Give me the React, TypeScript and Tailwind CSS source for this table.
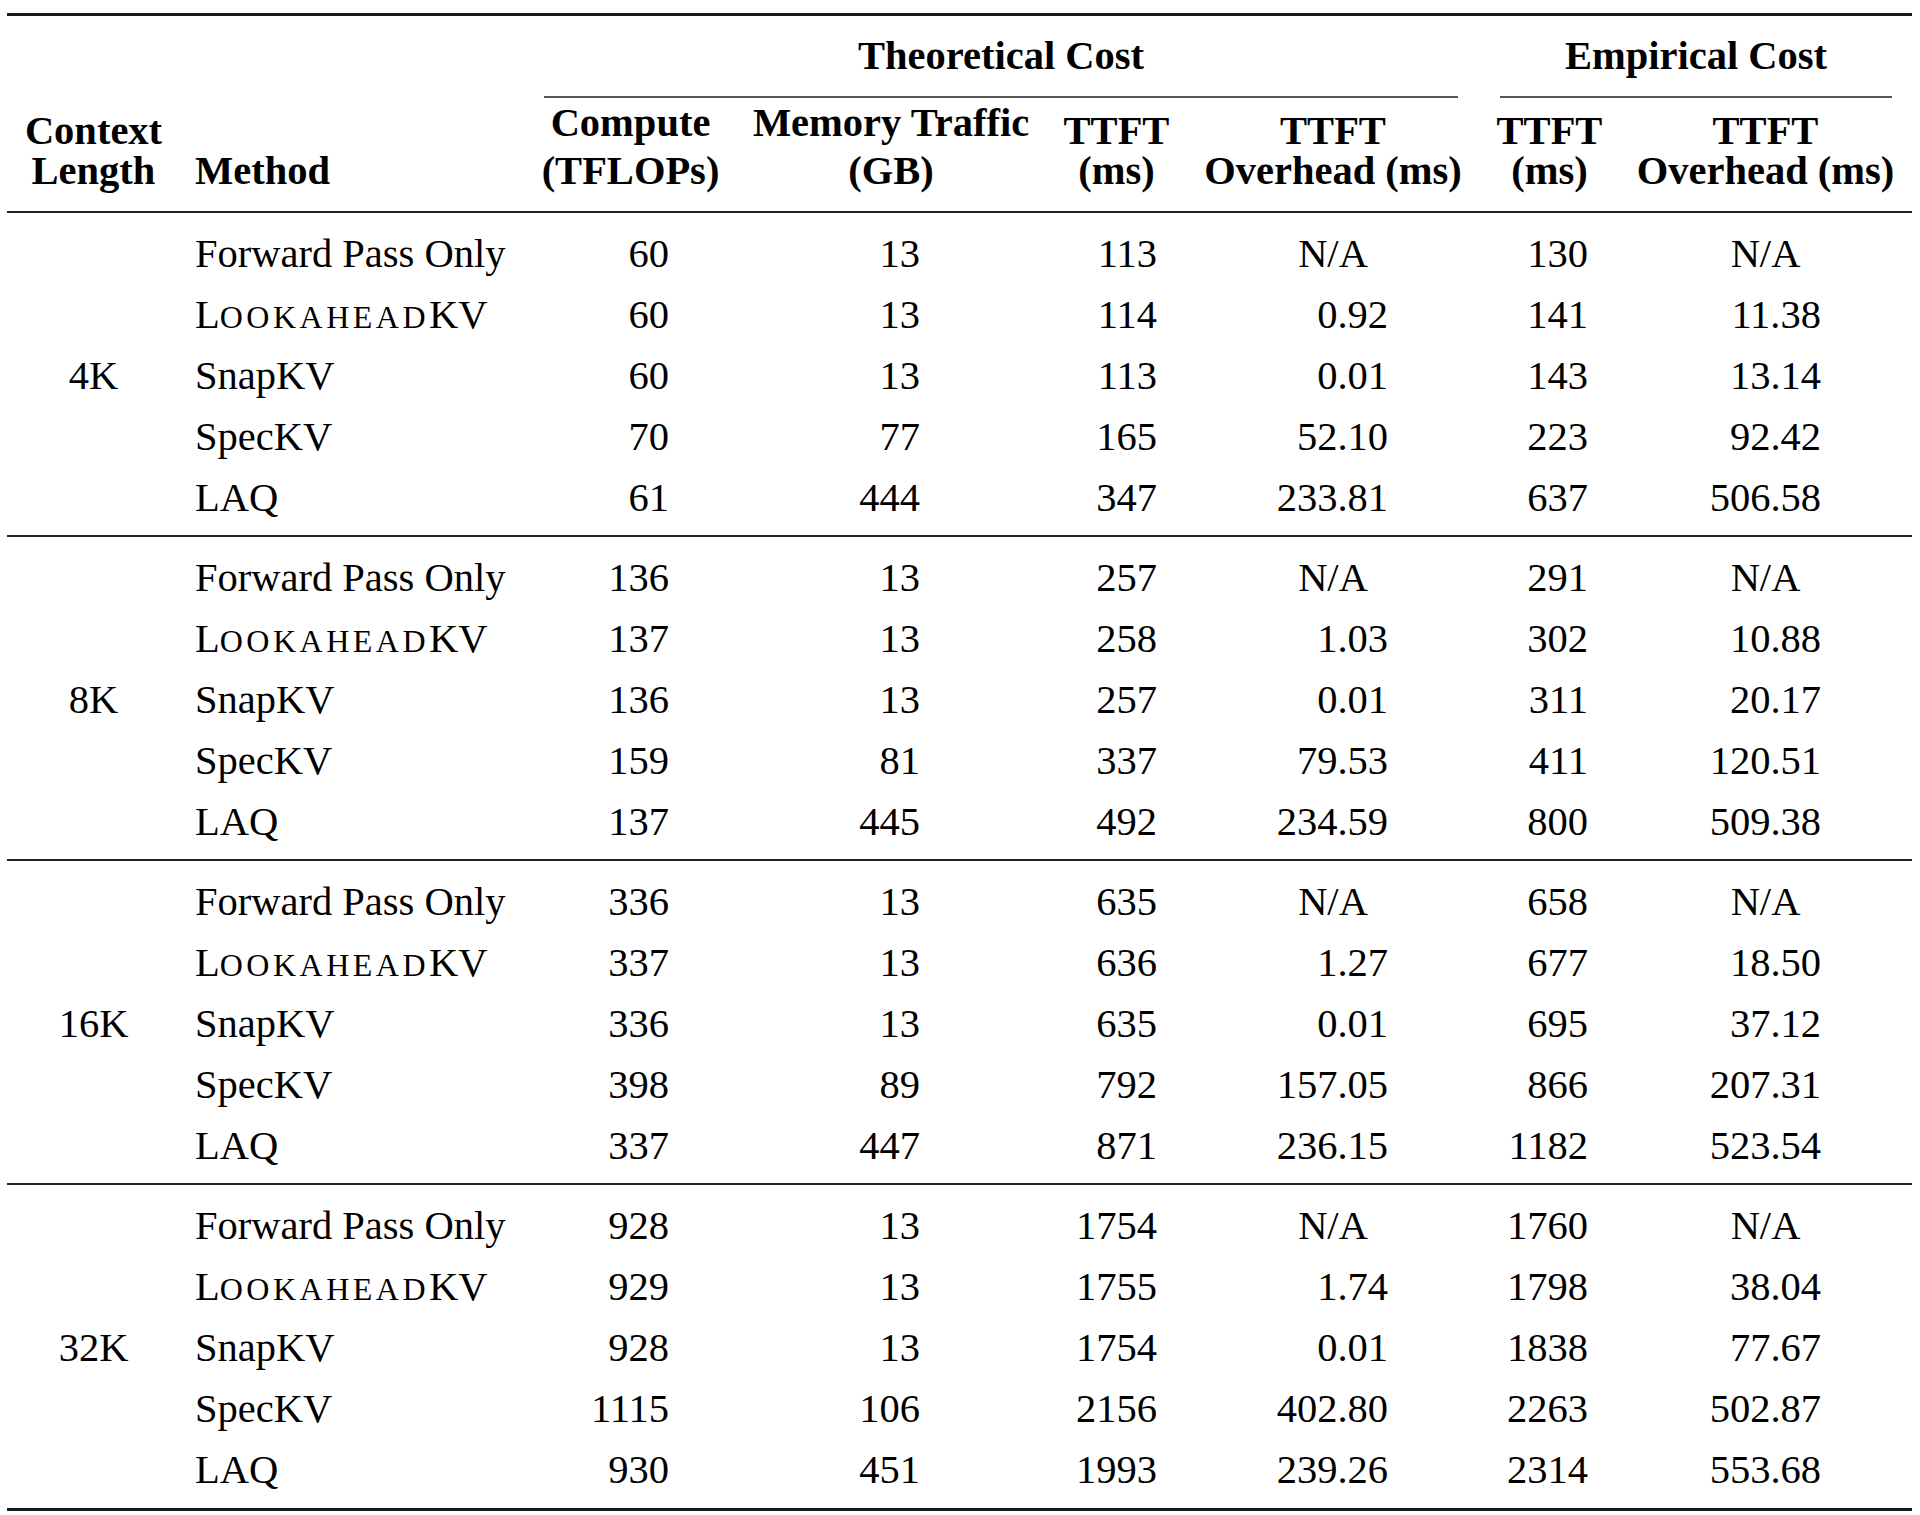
import React, { Fragment } from "react";

type Row = {
  method: string;
  compute: string;
  memory: string;
  ttft: string;
  overhead: string;
  empTtft: string;
  empOverhead: string;
};

type Group = { label: string; rows: Row[] };

const mk = (
  method: string,
  compute: string,
  memory: string,
  ttft: string,
  overhead: string,
  empTtft: string,
  empOverhead: string
): Row => ({ method, compute, memory, ttft, overhead, empTtft, empOverhead });

const groups: Group[] = [
  {
    label: "4K",
    rows: [
      mk("fwd", "60", "13", "113", "N/A", "130", "N/A"),
      mk("lookahead", "60", "13", "114", "0.92", "141", "11.38"),
      mk("SnapKV", "60", "13", "113", "0.01", "143", "13.14"),
      mk("SpecKV", "70", "77", "165", "52.10", "223", "92.42"),
      mk("LAQ", "61", "444", "347", "233.81", "637", "506.58"),
    ],
  },
  {
    label: "8K",
    rows: [
      mk("fwd", "136", "13", "257", "N/A", "291", "N/A"),
      mk("lookahead", "137", "13", "258", "1.03", "302", "10.88"),
      mk("SnapKV", "136", "13", "257", "0.01", "311", "20.17"),
      mk("SpecKV", "159", "81", "337", "79.53", "411", "120.51"),
      mk("LAQ", "137", "445", "492", "234.59", "800", "509.38"),
    ],
  },
  {
    label: "16K",
    rows: [
      mk("fwd", "336", "13", "635", "N/A", "658", "N/A"),
      mk("lookahead", "337", "13", "636", "1.27", "677", "18.50"),
      mk("SnapKV", "336", "13", "635", "0.01", "695", "37.12"),
      mk("SpecKV", "398", "89", "792", "157.05", "866", "207.31"),
      mk("LAQ", "337", "447", "871", "236.15", "1182", "523.54"),
    ],
  },
  {
    label: "32K",
    rows: [
      mk("fwd", "928", "13", "1754", "N/A", "1760", "N/A"),
      mk("lookahead", "929", "13", "1755", "1.74", "1798", "38.04"),
      mk("SnapKV", "928", "13", "1754", "0.01", "1838", "77.67"),
      mk("SpecKV", "1115", "106", "2156", "402.80", "2263", "502.87"),
      mk("LAQ", "930", "451", "1993", "239.26", "2314", "553.68"),
    ],
  },
];

const cols =
  "grid grid-cols-[173px_360px_181px_340px_111px_322px_111px_307px]";

function MethodName({ name }: { name: string }) {
  if (name === "fwd") return <>Forward Pass Only</>;
  if (name === "lookahead")
    return (
      <>
        L<span className="text-[32px] tracking-[3.5px]">OOKAHEAD</span>KV
      </>
    );
  return <>{name}</>;
}

function Header() {
  return (
    <div className={`${cols} font-bold`}>
      <div className="row-span-2 self-end pb-[20px] text-center leading-[40px]">
        Context
        <br />
        Length
      </div>
      <div className="row-span-2 self-end pb-[20px] pl-[15px] leading-[40px]">
        Method
      </div>
      <div className="col-span-4 ml-[4px] mr-[36px] pt-[20px]">
        <div className="text-center leading-[40px]">Theoretical Cost</div>
        <div className="mt-[20px] h-[2px] bg-[#555]" />
      </div>
      <div className="col-span-2 ml-[6px] mr-[20px] pt-[20px]">
        <div className="text-center leading-[40px]">Empirical Cost</div>
        <div className="mt-[20px] h-[2px] bg-[#555]" />
      </div>

      <div className="pt-[5px] pb-[20px] text-center leading-[40px]">
        <div className="mb-[8px]">Compute</div>
        <div>(TFLOPs)</div>
      </div>
      <div className="pt-[5px] pb-[20px] text-center leading-[40px]">
        <div className="mb-[8px]">Memory Traffic</div>
        <div>(GB)</div>
      </div>
      <div className="pt-[13px] pb-[20px] text-center leading-[40px]">
        TTFT
        <br />
        (ms)
      </div>
      <div className="pt-[13px] pb-[20px] text-center leading-[40px]">
        TTFT
        <br />
        Overhead (ms)
      </div>
      <div className="pt-[13px] pb-[20px] text-center leading-[40px]">
        TTFT
        <br />
        (ms)
      </div>
      <div className="pt-[13px] pb-[20px] pl-[14px] text-center leading-[40px]">
        TTFT
        <br />
        Overhead (ms)
      </div>
    </div>
  );
}

function GroupBlock({ group, last }: { group: Group; last: boolean }) {
  return (
    <div
      className={`${cols} grid-rows-[repeat(5,61px)] pt-[10px] leading-[61px] ${
        last ? "pb-[8px]" : "pb-[7px]"
      }`}
    >
      <div className="row-span-5 flex items-center justify-center">
        {group.label}
      </div>
      {group.rows.map((r, i) => (
        <Fragment key={i}>
          <div className="pl-[15px] whitespace-nowrap">
            <MethodName name={r.method} />
          </div>
          <div className="pr-[52px] text-right">{r.compute}</div>
          <div className="pr-[141px] text-right">{r.memory}</div>
          <div className="pr-[15px] text-right">{r.ttft}</div>
          {r.overhead === "N/A" ? (
            <div className="text-center">N/A</div>
          ) : (
            <div className="pr-[106px] text-right">{r.overhead}</div>
          )}
          <div className="pr-[17px] text-right">{r.empTtft}</div>
          {r.empOverhead === "N/A" ? (
            <div className="pl-[14px] text-center">N/A</div>
          ) : (
            <div className="pr-[91px] text-right">{r.empOverhead}</div>
          )}
        </Fragment>
      ))}
    </div>
  );
}

export default function App() {
  return (
    <div className="min-h-[1515px] w-[1920px] bg-white pt-[13px] pl-[7px]">
      <div className="w-[1905px] font-['Liberation_Serif',serif] text-[40.5px] text-black">
        <div className="h-[3px] bg-[#1a1a1a]" />
        <Header />
        <div className="h-[2px] bg-[#222]" />
        {groups.map((g, i) => (
          <Fragment key={g.label}>
            {i > 0 && <div className="h-[2px] bg-[#222]" />}
            <GroupBlock group={g} last={i === groups.length - 1} />
          </Fragment>
        ))}
        <div className="h-[3px] bg-[#1a1a1a]" />
      </div>
    </div>
  );
}
